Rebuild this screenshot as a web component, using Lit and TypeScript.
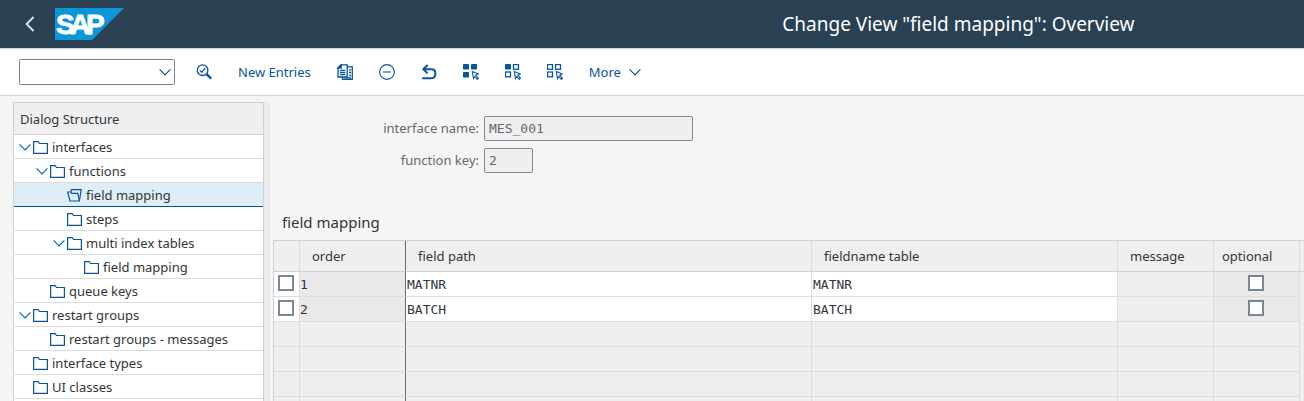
import { LitElement, html, svg, css, nothing } from "lit";
import { customElement, property } from "lit/decorators.js";

interface TreeNode {
  label: string;
  level: number;
  expanded?: boolean;
  selected?: boolean;
}

interface MappingRow {
  order: string;
  path: string;
  table: string;
}

const TREE: TreeNode[] = [
  { label: "interfaces", level: 0, expanded: true },
  { label: "functions", level: 1, expanded: true },
  { label: "field mapping", level: 2, selected: true },
  { label: "steps", level: 2 },
  { label: "multi index tables", level: 2, expanded: true },
  { label: "field mapping", level: 3 },
  { label: "queue keys", level: 1 },
  { label: "restart groups", level: 0, expanded: true },
  { label: "restart groups - messages", level: 1 },
  { label: "interface types", level: 0 },
  { label: "UI classes", level: 0 },
];

const ROWS: MappingRow[] = [
  { order: "1", path: "MATNR", table: "MATNR" },
  { order: "2", path: "BATCH", table: "BATCH" },
];

const EMPTY_ROWS = [0, 1, 2, 3];

const cursor = svg`<path d="M9.3 7.6 15.2 10 12.8 11.2 15.4 14.2 14.2 15.3 11.7 12.4 10.5 14.5Z" fill="#fff" stroke="currentColor" stroke-width="1.1"/>`;

const filled = (x: number, y: number) =>
  svg`<rect x=${x} y=${y} width="6" height="5.5" rx=".8" fill="currentColor"/>`;
const hollow = (x: number, y: number) =>
  svg`<rect x=${x + 0.5} y=${y + 0.5} width="5" height="4.8" fill="none" stroke="currentColor" stroke-width="1.3"/>`;

const ICONS = {
  detail: svg`<g fill="none" stroke="currentColor"><circle cx="6.6" cy="6.2" r="5.3" stroke-width="1.3"/><path d="M3.8 6.4 5.8 8.3 9.2 4.2" stroke-width="1.3"/><path d="M10.6 10.2 15.2 14.6" stroke-width="2.4"/></g>`,
  copy: svg`<g fill="none" stroke="currentColor" stroke-width="1.3"><path d="M4 .8H10.2V13H1V4Z"/><path d="M4.2.8V4H1Z" fill="currentColor"/><path d="M3 6.5H8.2M3 8.6H8.2M3 10.7H8.2"/><path d="M10.2 2.8H15.3V15.3H5.5V13M12 5.8H14M12 8.5H14M12 11.5H14M7.5 13.8H14"/></g>`,
  minus: svg`<g fill="none" stroke="currentColor" stroke-width="1.1"><circle cx="8" cy="8" r="7.4"/><path d="M4 8H12"/></g>`,
  undo: svg`<g fill="none" stroke="currentColor" stroke-width="2"><path d="M6.6 1 2.4 5.2 6.6 9.4"/><path d="M2.6 5.2H10.5C13 5.2 14.4 7 14.4 9.6 14.4 12.4 12.8 14.2 10.4 14.2H1.2"/></g>`,
  all: svg`${filled(0, 0)}${filled(8, 0)}${filled(0, 8)}${cursor}`,
  block: svg`${filled(0, 0)}${hollow(8, 0)}${hollow(0, 7.5)}${cursor}`,
  none: svg`${hollow(0, 0)}${hollow(8, 0)}${hollow(0, 7.5)}${cursor}`,
};

const icon = (shape: unknown) =>
  html`<svg class="icon" viewBox="0 0 16 16" aria-hidden="true">${shape}</svg>`;

const chevron = html`<svg class="chevron" viewBox="0 0 12 8" aria-hidden="true">
  <path d="M.6 1.4 6 6.8 11.4 1.4" fill="none" stroke="currentColor" stroke-width="1.2" />
</svg>`;

@customElement("shell-header")
class ShellHeader extends LitElement {
  @property() heading = "";

  static styles = css`
    :host {
      display: flex;
      align-items: center;
      height: 48px;
      background: #2a4154;
      border-bottom: 1px solid #d0d3d5;
      color: #fff;
      font-family: "Noto Sans", "Open Sans", sans-serif;
    }
    .start {
      display: flex;
      align-items: center;
      gap: 13px;
      flex: 0 0 47%;
      padding-left: 18px;
      box-sizing: border-box;
    }
    .back {
      display: flex;
      justify-content: center;
      width: 24px;
      padding: 0;
      border: 0;
      background: none;
      color: #d5edfb;
    }
    .back svg {
      width: 10px;
      height: 16px;
    }
    .logo {
      width: 69px;
      height: 32px;
      overflow: visible;
    }
    .logo text {
      font: 700 28px/32px "Liberation Sans", sans-serif;
      fill: #fff;
      stroke: #fff;
      stroke-width: 0.8px;
    }
    h1 {
      flex: 1;
      margin: 0;
      text-align: center;
      font-size: 19px;
      line-height: 28px;
      font-weight: 400;
      white-space: nowrap;
    }
  `;

  render() {
    return html`
      <div class="start">
        <button class="back" aria-label="Back">
          <svg viewBox="0 0 10 16" aria-hidden="true">
            <path d="M8.6 1 1.6 8 8.6 15" fill="none" stroke="currentColor" stroke-width="1.8" />
          </svg>
        </button>
        <svg class="logo" viewBox="0 0 69 32" role="img" aria-label="SAP">
          <path d="M0 0H69L37 32H0Z" fill="#0a97d9" />
          <text x="1 15 31" y="26">SAP</text>
        </svg>
      </div>
      <h1>${this.heading}</h1>
    `;
  }
}

@customElement("action-bar")
class ActionBar extends LitElement {
  static styles = css`
    :host {
      display: flex;
      align-items: center;
      gap: 26px;
      height: 46px;
      padding-left: 19px;
      background: #fff;
      border-bottom: 1px solid #d3d3d3;
      font-family: "Noto Sans", "Open Sans", sans-serif;
      color: #0854a0;
    }
    .command {
      display: grid;
      align-items: center;
      width: 156px;
      margin-right: -5px;
    }
    .command select,
    .command .chevron {
      grid-area: 1 / 1;
    }
    select {
      appearance: none;
      width: 100%;
      height: 26px;
      margin: 0;
      border: 1px solid #74828f;
      border-radius: 2px;
      background: #fff;
    }
    .command .chevron {
      justify-self: end;
      margin-right: 4px;
      pointer-events: none;
    }
    button {
      display: flex;
      align-items: center;
      gap: 8px;
      height: 26px;
      padding: 0;
      border: 0;
      background: none;
      color: inherit;
      font-family: inherit;
      font-size: 13px;
      line-height: 18px;
      white-space: nowrap;
    }
    .icon {
      width: 16px;
      height: 16px;
    }
    .chevron {
      width: 12px;
      height: 8px;
    }
  `;

  render() {
    return html`
      <div class="command">
        <select aria-label="Transaction"><option></option></select>
        ${chevron}
      </div>
      <button aria-label="Details">${icon(ICONS.detail)}</button>
      <button>New Entries</button>
      <button aria-label="Copy As">${icon(ICONS.copy)}</button>
      <button aria-label="Delete">${icon(ICONS.minus)}</button>
      <button aria-label="Undo Change">${icon(ICONS.undo)}</button>
      <button aria-label="Select All">${icon(ICONS.all)}</button>
      <button aria-label="Select Block">${icon(ICONS.block)}</button>
      <button aria-label="Deselect All">${icon(ICONS.none)}</button>
      <button>More ${chevron}</button>
    `;
  }
}

@customElement("dialog-tree")
class DialogTree extends LitElement {
  @property({ attribute: false }) nodes: TreeNode[] = [];

  static styles = css`
    :host {
      display: block;
      border: 1px solid #d0d0d0;
      border-bottom: 0;
      background: #fff;
      color: #32363a;
      font-family: "Noto Sans", "Open Sans", sans-serif;
      font-size: 13px;
      line-height: 18px;
    }
    h2 {
      box-sizing: border-box;
      height: 32px;
      margin: 0;
      padding: 7px 0 0 6px;
      font-size: 13px;
      font-weight: 400;
      line-height: 18px;
      background: #efefef;
      border-bottom: 1px solid #d0d0d0;
    }
    ul {
      margin: 0;
      padding: 0;
      list-style: none;
    }
    li {
      display: flex;
      align-items: center;
      box-sizing: border-box;
      height: 24px;
      padding: 1px 0 0 5px;
      border-bottom: 1px solid #dcdcdc;
      white-space: nowrap;
    }
    .selected {
      background: #deeef7;
      border-bottom-color: #0a4f8c;
    }
    .indent {
      flex: none;
      width: 17px;
    }
    .toggle {
      flex: none;
      width: 14px;
      padding: 0;
      border: 0;
      background: none;
      color: #0a6ab6;
    }
    .chevron {
      display: block;
      width: 12px;
      height: 8px;
    }
    .folder {
      flex: none;
      width: 15px;
      height: 14px;
      margin-right: 4px;
      color: #0854a0;
    }
  `;

  private folder(open?: boolean) {
    const shape = open
      ? svg`<path d="M.7 4H3.8L4.6 5.4H10.8L12.4 13H3Z"/><path d="M4 4 4.4 1.6H14.2L12.4 13"/>`
      : svg`<path d="M.6 13.4V1.6H5.2L6.6 3.5H14.4V13.4Z"/>`;
    return html`<svg class="folder" viewBox="0 0 15 14" fill="none" stroke="currentColor" stroke-width="1.2" aria-hidden="true">${shape}</svg>`;
  }

  render() {
    return html`
      <h2>Dialog Structure</h2>
      <ul role="tree">
        ${this.nodes.map(
          (n) => html`<li
            role="treeitem"
            class=${n.selected ? "selected" : ""}
            aria-level=${n.level + 1}
            aria-selected=${n.selected ? "true" : "false"}
            aria-expanded=${n.expanded ? "true" : nothing}
          >
            ${Array.from({ length: n.level }, () => html`<span class="indent"></span>`)}
            ${n.expanded
              ? html`<button class="toggle" aria-label="Collapse ${n.label}">${chevron}</button>`
              : html`<span class="toggle"></span>`}
            ${this.folder(n.selected)}
            <span>${n.label}</span>
          </li>`
        )}
      </ul>
    `;
  }
}

@customElement("mapping-table")
class MappingTable extends LitElement {
  @property({ attribute: false }) rows: MappingRow[] = [];

  static styles = css`
    :host {
      display: block;
      color: #32363a;
      font-family: "Noto Sans", "Open Sans", sans-serif;
      font-size: 13px;
    }
    table {
      width: 100%;
      table-layout: fixed;
      border-collapse: separate;
      border-spacing: 0;
      border: solid #cfcfcf;
      border-width: 1px 0 0 1px;
      background: #efefef;
    }
    .c-select { width: 26px; }
    .c-order { width: 106px; }
    .c-path { width: 406px; }
    .c-table { width: 306px; }
    .c-message { width: 96px; }
    .c-optional { width: 86px; }
    th,
    td {
      box-sizing: border-box;
      border: solid #dedede;
      border-width: 0 1px 1px 0;
      text-align: left;
      font-weight: 400;
      white-space: nowrap;
    }
    th {
      height: 31px;
      padding: 0 0 0 12px;
      line-height: 18px;
      border-bottom-color: #cfcfcf;
    }
    th.tight {
      padding-left: 8px;
    }
    td {
      height: 25px;
      padding: 1px 0 0 1px;
      font-family: "DejaVu Sans Mono", "Liberation Mono", monospace;
      line-height: 18px;
    }
    th:last-child {
      border-right: 0;
    }
    td:last-child {
      border: 0;
    }
    .order {
      border-right-color: #6a6d70;
    }
    .edit {
      background: #fff;
    }
    .locked {
      background: #e9e9e9;
    }
    td.order {
      padding-left: 0;
    }
    .tick {
      padding: 0 1px 2px 0;
    }
    input {
      appearance: none;
      display: block;
      box-sizing: border-box;
      width: 16px;
      height: 16px;
      margin: 0 auto;
      border: 2px solid #7b8792;
      background: #fff;
    }
  `;

  render() {
    return html`
      <table>
        <colgroup>
          <col class="c-select" /><col class="c-order" /><col class="c-path" /><col class="c-table" />
          <col class="c-message" /><col class="c-optional" /><col />
        </colgroup>
        <thead>
          <tr>
            <th></th>
            <th class="order">order</th>
            <th>field path</th>
            <th>fieldname table</th>
            <th>message</th>
            <th class="tight">optional</th>
            <th></th>
          </tr>
        </thead>
        <tbody>
          ${this.rows.map(
            (r) => html`<tr>
              <td class="tick edit"><input type="checkbox" aria-label="Select row ${r.order}" /></td>
              <td class="order locked">${r.order}</td>
              <td class="edit">${r.path}</td>
              <td class="edit">${r.table}</td>
              <td></td>
              <td class="tick locked"><input type="checkbox" aria-label="Optional, row ${r.order}" /></td>
              <td></td>
            </tr>`
          )}
          ${EMPTY_ROWS.map(
            () => html`<tr>
              <td></td><td class="order"></td><td></td><td></td><td></td><td></td><td></td>
            </tr>`
          )}
        </tbody>
      </table>
    `;
  }
}

@customElement("app-root")
class AppRoot extends LitElement {
  static styles = css`
    :host {
      display: flex;
      flex-direction: column;
      height: 100vh;
      overflow: hidden;
      background: #f5f5f5;
      color: #32363a;
      font-family: "Noto Sans", "Open Sans", sans-serif;
      font-size: 13px;
    }
    shell-header,
    action-bar {
      flex: none;
    }
    .body {
      display: flex;
      flex: 1;
      min-height: 0;
      padding: 6px 0 0 13px;
      overflow: hidden;
    }
    dialog-tree {
      flex: 0 0 249px;
    }
    .splitter {
      flex: 0 0 6px;
      background: #e8ecec;
    }
    main {
      flex: 1;
      min-width: 0;
      padding: 14px 0 0 3px;
    }
    .fields {
      display: grid;
      grid-template-columns: 206px 1fr;
      align-items: center;
      gap: 7px 5px;
      color: #66696c;
    }
    label {
      padding-bottom: 2px;
      text-align: right;
      line-height: 18px;
    }
    input {
      box-sizing: border-box;
      height: 25px;
      padding: 0 4px;
      border: 1px solid #7f8c97;
      border-radius: 2px;
      background: #efefef;
      color: #66696c;
      font: 13px "DejaVu Sans Mono", "Liberation Mono", monospace;
    }
    .wide {
      width: 209px;
    }
    .narrow {
      width: 49px;
    }
    h2 {
      margin: 39px 0 7px 9px;
      font-size: 15px;
      font-weight: 400;
      line-height: 21px;
    }
  `;

  render() {
    return html`
      <shell-header heading='Change View "field mapping": Overview'></shell-header>
      <action-bar></action-bar>
      <div class="body">
        <dialog-tree .nodes=${TREE}></dialog-tree>
        <div class="splitter"></div>
        <main>
          <div class="fields">
            <label for="name">interface name:</label>
            <input id="name" class="wide" readonly .value=${"MES_001"} />
            <label for="key">function key:</label>
            <input id="key" class="narrow" readonly .value=${"2"} />
          </div>
          <h2>field mapping</h2>
          <mapping-table .rows=${ROWS}></mapping-table>
        </main>
      </div>
    `;
  }
}
